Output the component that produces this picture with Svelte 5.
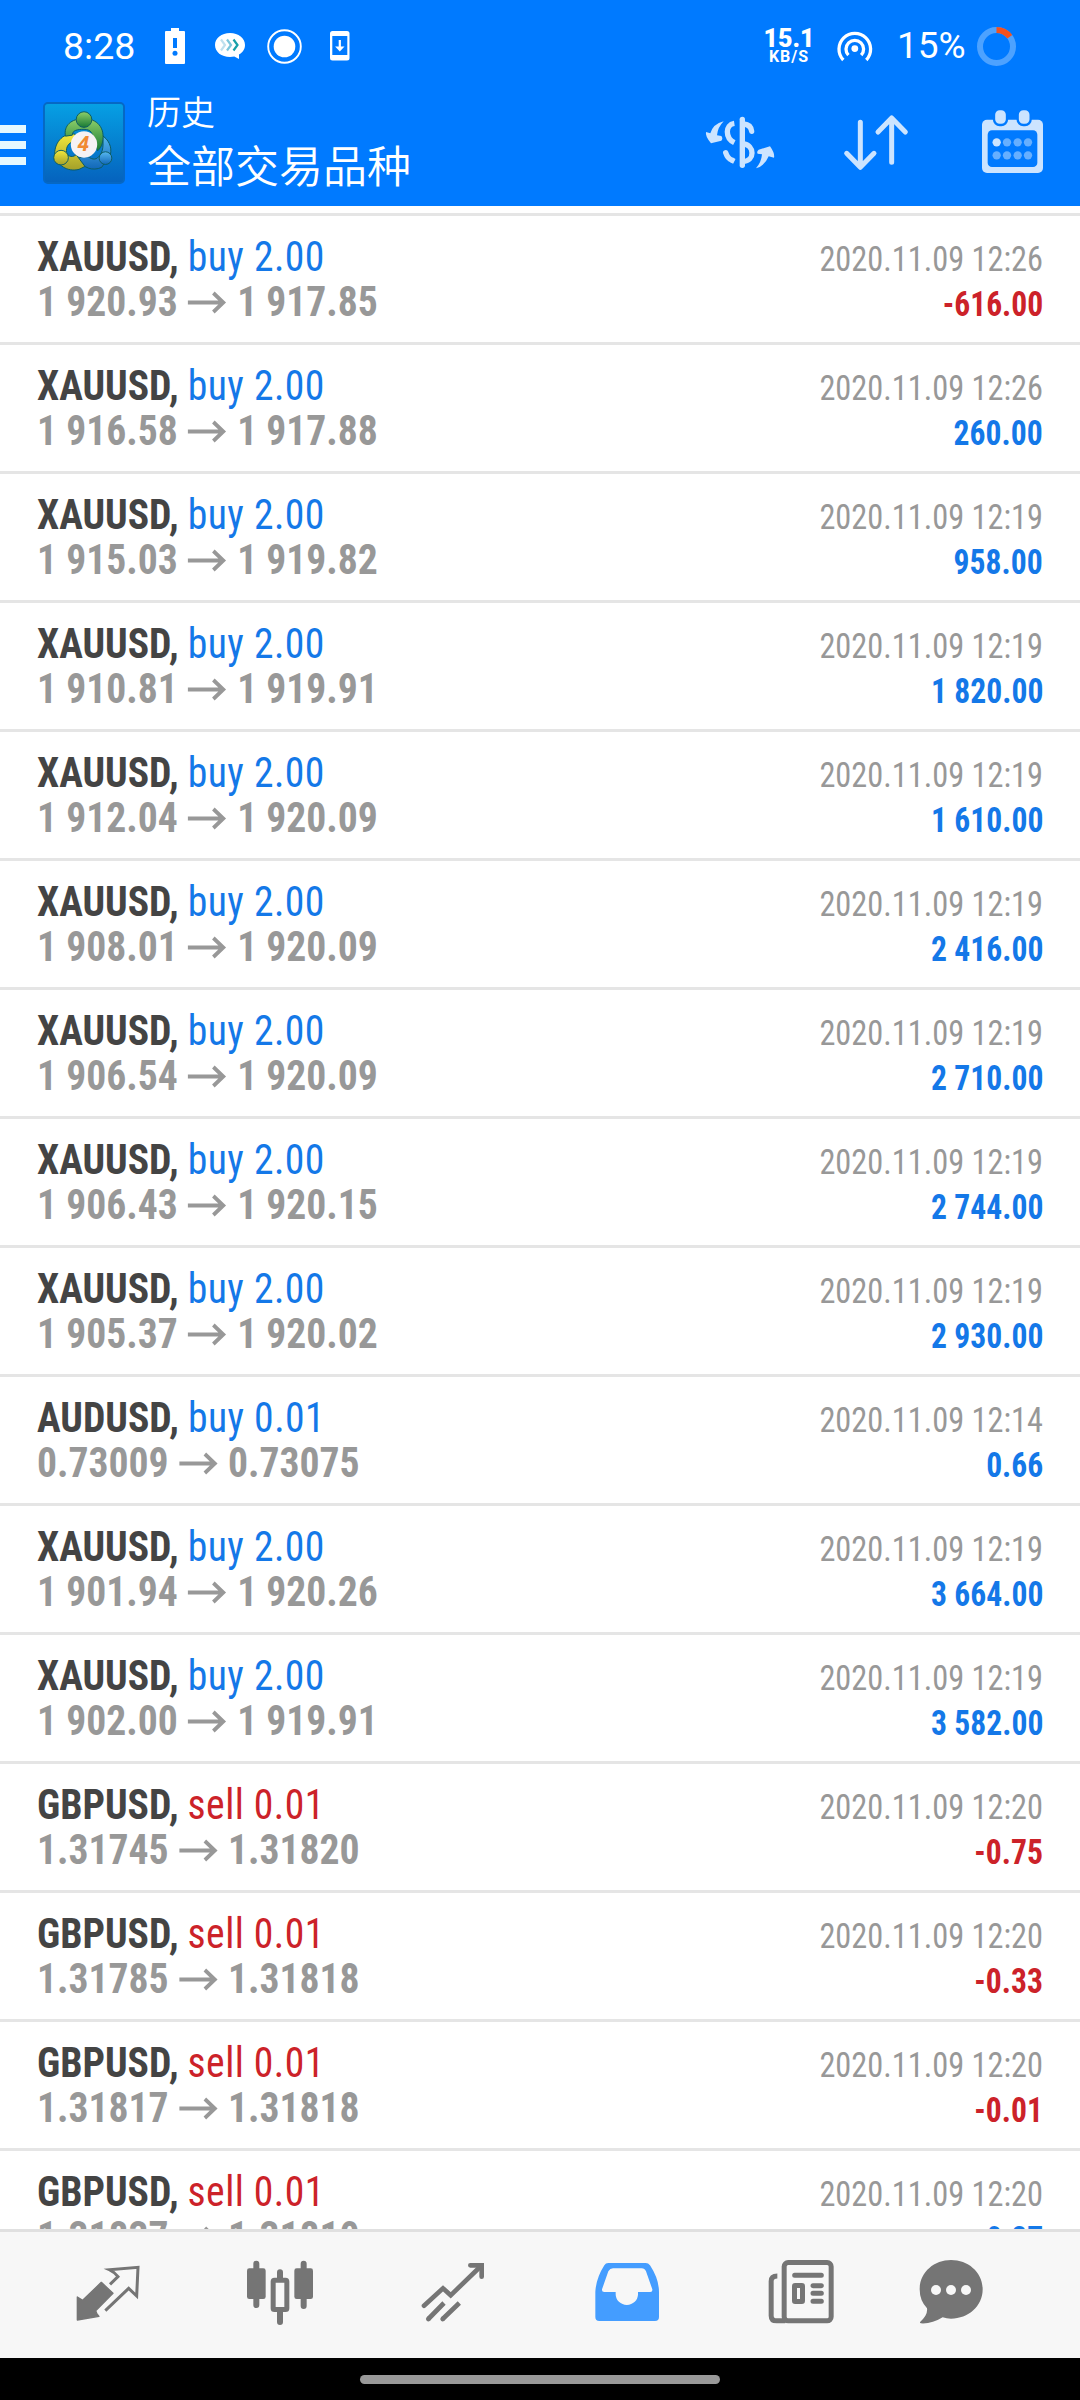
<script>
  const BOUGHT = 'buy 2.00';
  const SOLD = 'sell 0.01';

  // Closed positions, newest first.
  const deals = [
    { symbol: 'XAUUSD', side: BOUGHT, open: '1 920.93', close: '1 917.85', time: '2020.11.09 12:26', profit: '-616.00' },
    { symbol: 'XAUUSD', side: BOUGHT, open: '1 916.58', close: '1 917.88', time: '2020.11.09 12:26', profit: '260.00' },
    { symbol: 'XAUUSD', side: BOUGHT, open: '1 915.03', close: '1 919.82', time: '2020.11.09 12:19', profit: '958.00' },
    { symbol: 'XAUUSD', side: BOUGHT, open: '1 910.81', close: '1 919.91', time: '2020.11.09 12:19', profit: '1 820.00' },
    { symbol: 'XAUUSD', side: BOUGHT, open: '1 912.04', close: '1 920.09', time: '2020.11.09 12:19', profit: '1 610.00' },
    { symbol: 'XAUUSD', side: BOUGHT, open: '1 908.01', close: '1 920.09', time: '2020.11.09 12:19', profit: '2 416.00' },
    { symbol: 'XAUUSD', side: BOUGHT, open: '1 906.54', close: '1 920.09', time: '2020.11.09 12:19', profit: '2 710.00' },
    { symbol: 'XAUUSD', side: BOUGHT, open: '1 906.43', close: '1 920.15', time: '2020.11.09 12:19', profit: '2 744.00' },
    { symbol: 'XAUUSD', side: BOUGHT, open: '1 905.37', close: '1 920.02', time: '2020.11.09 12:19', profit: '2 930.00' },
    { symbol: 'AUDUSD', side: 'buy 0.01', open: '0.73009', close: '0.73075', time: '2020.11.09 12:14', profit: '0.66' },
    { symbol: 'XAUUSD', side: BOUGHT, open: '1 901.94', close: '1 920.26', time: '2020.11.09 12:19', profit: '3 664.00' },
    { symbol: 'XAUUSD', side: BOUGHT, open: '1 902.00', close: '1 919.91', time: '2020.11.09 12:19', profit: '3 582.00' },
    { symbol: 'GBPUSD', side: SOLD, open: '1.31745', close: '1.31820', time: '2020.11.09 12:20', profit: '-0.75' },
    { symbol: 'GBPUSD', side: SOLD, open: '1.31785', close: '1.31818', time: '2020.11.09 12:20', profit: '-0.33' },
    { symbol: 'GBPUSD', side: SOLD, open: '1.31817', close: '1.31818', time: '2020.11.09 12:20', profit: '-0.01' },
    { symbol: 'GBPUSD', side: SOLD, open: '1.31837', close: '1.31810', time: '2020.11.09 12:20', profit: '0.27' }
  ];
</script>

<div class="screen">
  <div class="status">
    <span class="clock">8:28</span>
    <svg class="s-batt" width="20" height="36" viewBox="0 0 20 36">
      <path fill="#fff" d="M6 0h8v3h5a1 1 0 0 1 1 1v31a1 1 0 0 1-1 1H1a1 1 0 0 1-1-1V4a1 1 0 0 1 1-1h5z" />
      <path stroke="#007aff" stroke-width="4" d="M10 10v10" />
      <circle cx="10" cy="25.3" r="2.5" fill="#007aff" />
    </svg>
    <svg class="s-chat" width="30" height="28" viewBox="0 0 30 28">
      <path fill="#fff" d="M15 1C6.500 1 0 6 0 13s6.500 12 15 12c1.500 0 3-.2 4.300-.5L24 27v-4.500c3.700-2 6-5.500 6-9.500C30 6 23.500 1 15 1z" />
      <g fill="none" stroke-width="2.200">
        <path stroke="#bfe0ee" d="M6 7.500l4 5.500-4 5.500" />
        <path stroke="#7cc6dc" d="M12 7.500l4 5.500-4 5.500" />
        <path stroke="#18a0a8" d="M18.500 7.500l4 5.500-4 5.500" />
      </g>
    </svg>
    <svg class="s-rec" width="35" height="35" viewBox="0 0 35 35">
      <circle cx="17.500" cy="17.500" r="16.300" fill="none" stroke="#fff" stroke-width="1.900" />
      <circle cx="17.500" cy="17.500" r="10.800" fill="#fff" />
    </svg>
    <svg class="s-phone" width="20" height="30" viewBox="0 0 20 30">
      <rect width="19.500" height="29.500" rx="2.500" fill="#fff" />
      <rect x="2.300" y="5" width="15" height="19" fill="#007aff" />
      <path fill="#fff" d="M8.700 9h2.200v6.500h3.600L9.800 20.500 5.100 15.500h3.600z" />
    </svg>
    <span class="speed"><b>15.1</b><small>KB/S</small></span>
    <svg class="s-spot" width="36" height="31" viewBox="0 0 36 31">
      <g fill="none" stroke="#fff" stroke-width="3.300">
        <path d="M6.300 29A15.800 15.800 0 1 1 29.300 29" />
        <path d="M11.400 24.200A8.800 8.800 0 1 1 24.200 24.200" />
      </g>
      <circle cx="17.800" cy="17.600" r="3.400" fill="#fff" />
    </svg>
    <span class="percent">15%</span>
    <svg class="s-ring" width="39" height="39" viewBox="0 0 39 39">
      <circle cx="19.500" cy="19.500" r="16.500" fill="none" stroke="#4da2ff" stroke-width="6" />
      <path d="M19.500 3A16.500 16.500 0 0 1 32.800 9.800" fill="none" stroke="#f4511e" stroke-width="6" />
    </svg>
  </div>

  <header class="bar">
    <div class="menu"><i></i><i></i><i></i></div>
    <svg class="logo" width="82" height="82" viewBox="0 0 84 84">
      <defs>
        <linearGradient id="tile" x1="0" y1="0" x2="0" y2="1">
          <stop offset="0" stop-color="#06a0e4" /><stop offset="1" stop-color="#0562bd" />
        </linearGradient>
        <linearGradient id="green" x1="0" y1="0" x2="0" y2="1">
          <stop offset="0" stop-color="#8fd06a" /><stop offset="1" stop-color="#187a35" />
        </linearGradient>
        <linearGradient id="yellow" x1="0" y1="0" x2="0" y2="1">
          <stop offset="0" stop-color="#f4e83b" /><stop offset="1" stop-color="#a3a02a" />
        </linearGradient>
        <linearGradient id="blue" x1="0" y1="0" x2="0" y2="1">
          <stop offset="0" stop-color="#57b8f0" /><stop offset="1" stop-color="#1167b8" />
        </linearGradient>
      </defs>
      <rect x="1" y="1" width="82" height="82" rx="4" fill="url(#tile)" stroke="#0668c4" stroke-width="2" />
      <g stroke="#0c5b62" stroke-width="1">
        <path fill="url(#blue)" d="M60 34c7 4 11 12 9 20L60 67c-9 4-19 1-24-9l8-4c5 5 10 6 13 2 5-5 5-12 4-22z" />
        <path fill="url(#yellow)" d="M33 33c-11-2-21 7-21 20 2 12 13 19 25 16l6-3-9-12c-5 4-10 1-10-4 0-6 4-9 9-10z" />
        <path fill="url(#green)" d="M23 35C21 24 29 17 42 17s22 9 19 24c-1 5-3 7-5 9l-6-10c2-8-1-12-8-12s-12 1-12 6z" />
        <circle cx="42" cy="18" r="8" fill="url(#green)" />
        <circle cx="18.500" cy="57" r="7.500" fill="url(#yellow)" />
        <circle cx="64" cy="57.500" r="6.500" fill="url(#blue)" />
      </g>
      <circle cx="42" cy="43.500" r="13.500" fill="#f6f2f4" />
      <text x="41.500" y="50.500" text-anchor="middle" class="four">4</text>
    </svg>
    <div class="titles">
      <span class="sub">历史</span>
      <span class="main">全部交易品种</span>
    </div>
    <svg class="a-cash" width="70" height="54" viewBox="0 0 210 162">
      <g fill="none" stroke="#cce4ff" stroke-width="16">
        <path d="M88 28C60 32 60 72 88 86" />
        <path stroke-linecap="round" d="M62 116Q68 134 80 138" />
        <path d="M80 138L88 142" />
        <path d="M112 16V154" stroke-linecap="round" />
        <path stroke-linecap="round" d="M116 30Q138 32 140 52" />
        <path d="M114 90C150 92 150 142 114 142" />
      </g>
      <g fill="#cce4ff">
        <path d="M56 22Q24 30 16 58L3 54Q0 66 18 88L49 80Q55 74 49 66L36 64Q38 40 56 22z" />
        <path d="M153 163Q180 155 191 127L207 131Q210 118 195 97L161 107Q154 113 158 119L171 121Q169 145 153 163z" />
      </g>
    </svg>
    <svg class="a-sort" width="64" height="56" viewBox="0 0 192 168">
      <g fill="none" stroke="#cce4ff" stroke-width="15" stroke-linecap="round" stroke-linejoin="round">
        <path d="M49 22V155M8 115L49 157L90 115" />
        <path d="M143 142V10M102 51L143 9L184 51" />
      </g>
    </svg>
    <svg class="a-cal" width="61" height="63" viewBox="0 0 183 189">
      <rect y="29" width="183" height="160" rx="15" fill="#cce4ff" />
      <rect x="17" y="61" width="149" height="110" rx="13" fill="#007aff" />
      <g fill="#cce4ff" stroke="#007aff" stroke-width="7">
        <rect x="36" y="-3" width="39" height="48" rx="17" />
        <rect x="107" y="-3" width="39" height="48" rx="17" />
      </g>
      <circle cx="44" cy="97" r="12.500" fill="#cce4ff" />
      <g fill="#66afff">
        {#each [75, 107, 138] as cx}<circle {cx} cy="97" r="12.500" />{/each}
        {#each [44, 75, 107, 138] as cx}<circle {cx} cy="136" r="12.500" />{/each}
      </g>
    </svg>
  </header>

  <main class="list">
    {#each deals as deal}
      <div class="deal">
        <div class="left">
          <div class="line">
            <span class="symbol">{deal.symbol},</span>
            <span class="side" class:sell={deal.side.startsWith('sell')}>{deal.side}</span>
          </div>
          <div class="line prices">
            <span>{deal.open}</span>
            <svg width="41" height="22" viewBox="0 0 41 22">
              <path d="M0 11.500H38M27 2L37.500 11.500L27 21" fill="none" stroke="#989898" stroke-width="4" />
            </svg>
            <span>{deal.close}</span>
          </div>
        </div>
        <div class="right">
          <span class="time">{deal.time}</span>
          <span class="profit" class:loss={deal.profit.startsWith('-')}>{deal.profit}</span>
        </div>
      </div>
    {/each}
  </main>

  <nav class="tabs">
    <div class="tab">
      <svg width="66" height="66" viewBox="0 0 198 198">
        <path fill="#757575" stroke="#757575" stroke-width="4" stroke-linejoin="round" d="M79 70L114 103L62 155L66 165L72 172L7 183V114L23 124z" />
        <path fill="none" stroke="#757575" stroke-width="9" d="M105 76L129 53Q118 39 103 32L189 25L185 111L161 88L91 155" />
      </svg>
    </div>
    <div class="tab">
      <svg width="66" height="66" viewBox="0 0 198 198">
        <g stroke="#757575" stroke-width="18" stroke-linecap="round">
          <path d="M25 14V138M167 14V141M96 40V62M96 158V189" />
        </g>
        <rect x="-3" y="28" width="56" height="92" rx="7" fill="#757575" />
        <rect x="139" y="28" width="56" height="92" rx="7" fill="#757575" />
        <rect x="75.500" y="63.500" width="41" height="88" rx="4" fill="#f7f7f7" stroke="#757575" stroke-width="15" />
      </svg>
    </div>
    <div class="tab">
      <svg width="66" height="66" viewBox="0 0 198 198">
        <g fill="none" stroke="#757575" stroke-width="14" stroke-linecap="round">
          <path stroke-linejoin="miter" d="M9 140L66 88L89 109L180 21" />
          <path d="M148 19H182V53" />
        </g>
        <g stroke="#757575" stroke-width="14">
          <path d="M22 180L69 132M65 180L115 132" />
          <path stroke-linecap="round" d="M22 180l1-1M65 180l1-1" />
        </g>
      </svg>
    </div>
    <div class="tab">
      <svg width="66" height="66" viewBox="0 0 198 198">
        <path fill="#449dff" d="M40 12H152Q160 12 165 19Q192 60 192 99V174Q192 186 180 186H13Q1 186 1 174V99Q3 58 28 19Q32 12 40 12z" />
        <path fill="#f7f7f7" d="M54 28H140Q149 28 153 37L172 91Q173 99 166 99H129V106A33.500 32 0 0 1 62 106V99H28Q20 99 21 91L40 37Q45 28 54 28z" />
      </svg>
    </div>
    <div class="tab">
      <svg width="66" height="66" viewBox="0 0 198 198">
        <g fill="none" stroke="#757575" stroke-width="15">
          <rect x="48.500" y="10.500" width="141" height="175" rx="12" />
          <path d="M28 51Q9.500 51 9.500 67V170Q9.500 185.500 26 185.500H52" />
          <g stroke-linecap="round">
            <path d="M80 49H160M135 80H160M135 103H160M135 127H160" />
          </g>
          <rect x="79.500" y="79.500" width="24" height="48" rx="2" />
        </g>
      </svg>
    </div>
    <div class="tab">
      <svg width="66" height="66" viewBox="0 0 198 198">
        <path fill="#757575" d="M99 3C151 3 194 40 194 91S151 179 99 179Q86 179 74 175Q42 195 9 193Q4 192 7 188Q30 168 27 148Q5 125 5 91C5 40 48 3 99 3z" />
        <g fill="#f7f7f7"><circle cx="54" cy="93" r="15" /><circle cx="99" cy="93" r="15" /><circle cx="144" cy="93" r="15" /></g>
      </svg>
    </div>
  </nav>

  <div class="gesture"><span></span></div>
</div>

<style>
  :global(body) { margin: 0; background: #000; }

  .screen {
    display: flex;
    flex-direction: column;
    width: 1080px;
    height: 2400px;
    overflow: hidden;
    background: #fff;
    font-family: Roboto, "Noto Sans CJK SC", sans-serif;
  }

  svg { display: block; flex: none; overflow: visible; }

  .status {
    display: flex;
    align-items: center;
    flex: none;
    height: 92px;
    background: #007aff;
    color: #fff;
    white-space: nowrap;
  }

  .clock {
    width: 102px;
    padding-left: 63px;
    font-size: 37.5px;
    line-height: 46px;
  }

  .s-chat { margin-left: 30px; }
  .s-rec { margin-left: 22px; }
  .s-phone { margin-left: 28px; }

  .speed {
    display: flex;
    flex-direction: column;
    align-items: center;
    width: 60px;
    margin: 0 18px 0 409px;
    font-weight: 700;
  }

  .speed b { font-size: 25px; line-height: 21px; }
  .speed small { font-size: 16px; line-height: 16px; letter-spacing: 1px; }

  .percent { width: 70px; margin: 0 10px 0 24px; font-size: 37px; line-height: 44px; }

  .bar {
    display: flex;
    align-items: flex-start;
    flex: none;
    height: 114px;
    background: #007aff;
    color: #fff;
  }

  .menu {
    display: flex;
    flex-direction: column;
    gap: 8px;
    width: 26px;
    margin-top: 33px;
  }

  .menu i { height: 8px; background: #e6f8ff; }

  .logo { margin: 10px 0 0 17px; }

  .four {
    font: italic 700 21px "Open Sans", sans-serif;
    fill: #f08a33;
  }

  .titles {
    display: flex;
    flex-direction: column;
    flex: 1;
    margin: -2px 0 0 22px;
    font-family: "Noto Sans CJK SC", sans-serif;
    font-weight: 350;
    white-space: nowrap;
  }

  .sub { font-size: 34px; line-height: 42px; }
  .main { font-size: 44px; line-height: 65px; }

  .a-cash { margin: 22px 69px 0 0; }
  .a-sort { margin: 23px 74px 0 0; }
  .a-cal { margin: 18px 37px 0 0; }

  .list {
    flex: 1;
    min-height: 0;
    overflow: hidden;
    margin-top: 7px;
    border-top: 3px solid #e5e5e5;
    font-family: "Roboto Condensed", Roboto, sans-serif;
    font-stretch: 75%;
  }

  .deal {
    display: flex;
    justify-content: space-between;
    height: 126px;
    padding: 0 37px;
    border-bottom: 3px solid #e5e5e5;
    white-space: nowrap;
  }

  .left {
    padding-top: 18px;
    transform: scaleX(0.943);
    transform-origin: left;
  }

  .line {
    display: flex;
    gap: 11px;
    height: 45px;
    font-size: 42px;
    line-height: 45px;
  }

  .symbol { color: #444; font-weight: 700; }
  .side { color: #1478e8; margin-left: -1.5px; letter-spacing: 0.5px; }
  .side.sell { color: #cc2229; }

  .prices {
    align-items: center;
    color: #989898;
    font-weight: 700;
  }

  .right {
    display: flex;
    flex-direction: column;
    align-items: flex-end;
    padding-top: 21px;
    font-size: 35px;
    line-height: 45px;
  }

  .time {
    color: #989898;
    transform: scaleX(0.924);
    transform-origin: right;
  }

  .profit {
    color: #1478e8;
    font-weight: 700;
    transform: scaleX(0.903);
    transform-origin: right;
  }

  .profit.loss { color: #cc2229; }

  .tabs {
    display: flex;
    flex: none;
    height: 126px;
    padding-left: 21px;
    border-top: 3px solid #e0e0e0;
    background: #f7f7f7;
  }

  .tab {
    display: flex;
    justify-content: center;
    flex: none;
    width: 173.4px;
    padding-top: 27px;
  }

  .tab:last-child { width: 126px; }

  .gesture {
    display: flex;
    justify-content: center;
    flex: none;
    height: 42px;
    background: #000;
  }

  .gesture span {
    width: 360px;
    height: 9px;
    margin-top: 17px;
    border-radius: 5px;
    background: #999;
  }
</style>
